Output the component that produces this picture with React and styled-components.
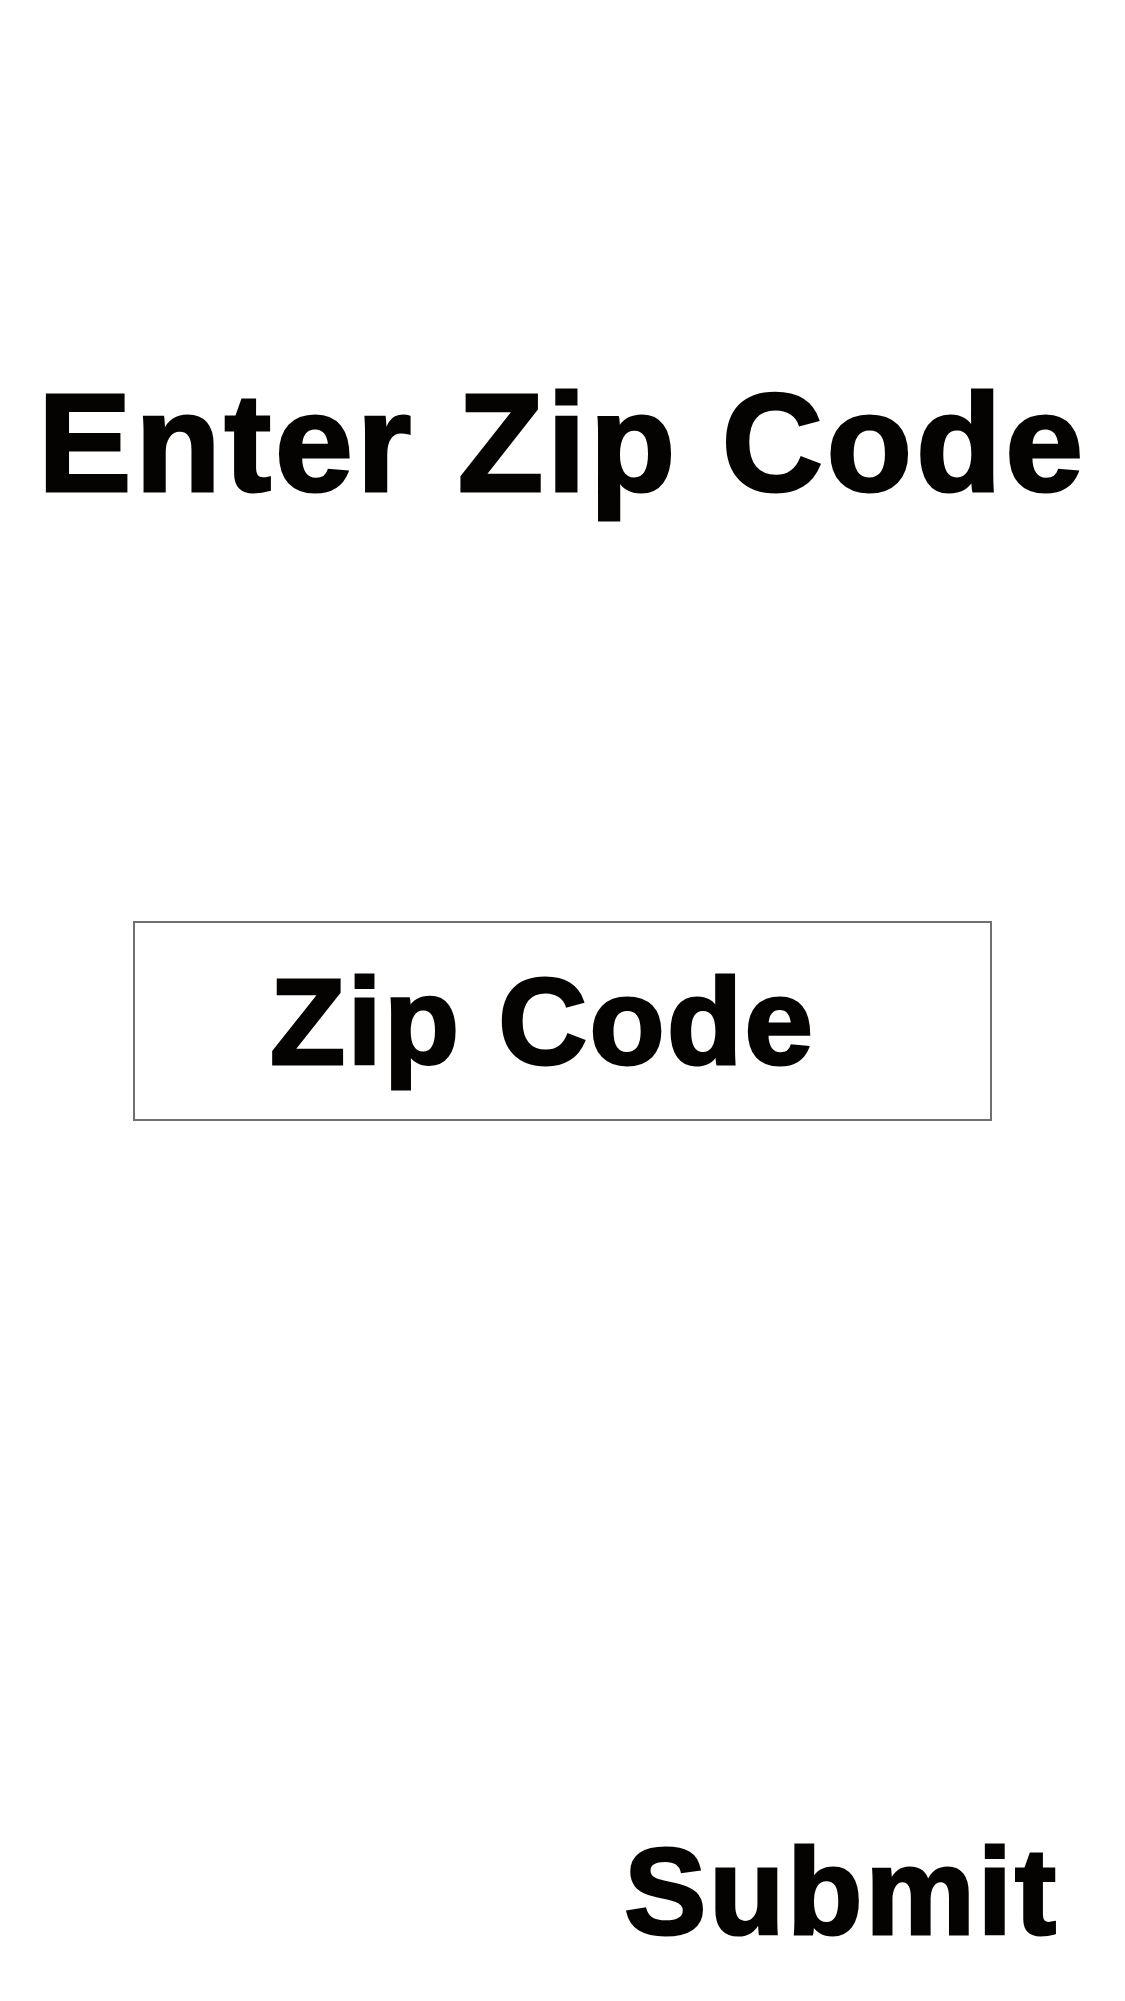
import React from "react";
import styled, { createGlobalStyle } from "styled-components";

const Global = createGlobalStyle`
  html, body { margin: 0; padding: 0; background: #ffffff; }
  body { font-family: "Liberation Sans", Arial, "Noto Sans CJK JP", sans-serif; }
`;

const Page = styled.main`
  box-sizing: border-box;
  height: 2001px;
  display: flex;
  flex-direction: column;
  align-items: center;
  padding-top: 373px;
  color: #050302;
`;

const heavy = `
  font-weight: 700;
  -webkit-text-stroke: 3px #050302;
`;

const Title = styled.h1`
  margin: 0;
  font-size: 140px;
  line-height: 1;
  letter-spacing: 3.8px;
  white-space: nowrap;
  ${heavy}
`;

const ZipInput = styled.input`
  box-sizing: border-box;
  margin-top: 408px;
  width: 859px;
  height: 200px;
  border: 2px solid #707070;
  border-radius: 0;
  padding: 0 0 0 135px;
  font-family: inherit;
  font-size: 123px;
  letter-spacing: 2.4px;
  color: #050302;
  outline: none;
  ${heavy}
  &::placeholder { color: #050302; opacity: 1; }
`;

const Footer = styled.div`
  margin-top: auto;
  align-self: stretch;
  display: flex;
  justify-content: flex-end;
  padding: 0 66px 48px 0;
`;

const SubmitButton = styled.button`
  border: none;
  background: none;
  padding: 0;
  font-family: inherit;
  font-size: 123px;
  line-height: 1;
  letter-spacing: 3px;
  color: #050302;
  cursor: pointer;
  ${heavy}
`;

export default function App() {
  return (
    <>
      <Global />
      <Page>
        <Title>Enter Zip Code</Title>
        <ZipInput type="text" placeholder="Zip Code" />
        <Footer>
          <SubmitButton type="button">Submit</SubmitButton>
        </Footer>
      </Page>
    </>
  );
}
